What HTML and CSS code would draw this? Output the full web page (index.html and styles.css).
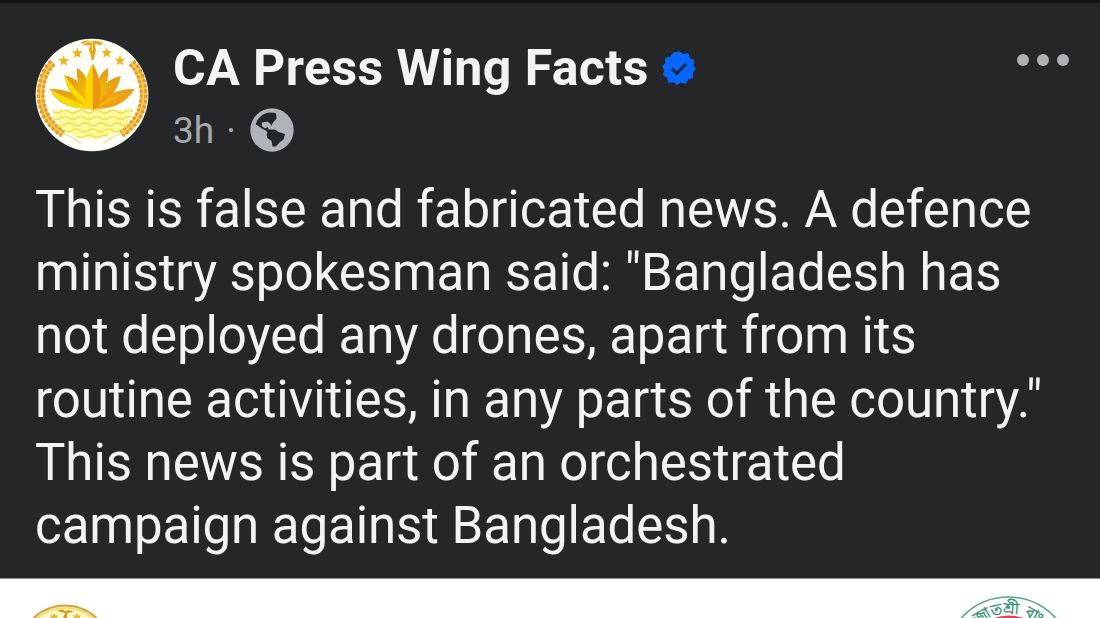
FILE: index.html
```html
<!DOCTYPE html>
<html lang="en">
<head>
    <meta charset="UTF-8">
    <meta name="viewport" content="width=device-width, initial-scale=1.0">
    <title>CA Press Wing Facts</title>
    <link rel="stylesheet" href="styles.css">
</head>
<body>
    <div class="post">
        <div class="header">
            <svg class="avatar" viewBox="30 24 342 342">
                <defs>
                    <linearGradient id="gold" x1="0" y1="0" x2="0" y2="1">
                        <stop offset="0" stop-color="#e09a1c"/>
                        <stop offset="1" stop-color="#f7c800"/>
                    </linearGradient>
                    <path id="star" d="M0-16 4-5 16-5 7 3 10 15 0 8-10 15-7 3-16-5-4-5Z"/>
                    <g id="wreath">
                        <path d="M83 98Q50 130 47 190Q46 265 114 312" fill="none" stroke="#f3bd45" stroke-width="20"/>
                        <path d="M83 98Q50 130 47 190Q46 265 114 312" fill="none" stroke="#e39a2c" stroke-width="24" stroke-dasharray="9 6"/>
                        <path d="M83 98Q50 130 47 190Q46 265 114 312" fill="none" stroke="#f8d765" stroke-width="4"/>
                        <path d="M112 310Q140 318 168 340" fill="none" stroke="#e8d78a" stroke-width="3"/>
                    </g>
                </defs>
                <circle cx="201" cy="195" r="169" fill="#fffef6"/>
                <use href="#wreath"/>
                <use href="#wreath" transform="translate(403 0) scale(-1 1)"/>
                <g fill="#eeb21d">
                    <use href="#star" x="116" y="92"/>
                    <use href="#star" x="157" y="69"/>
                    <use href="#star" x="245" y="68"/>
                    <use href="#star" x="285" y="91"/>
                </g>
                <path d="M167 38Q180 28 198 34Q218 28 234 40L226 47Q216 39 209 44L213 60Q210 72 206 90H200Q198 72 191 60L196 45Q184 50 167 38Z" fill="#e8a51c"/>
                <path d="M176 40Q190 33 202 37V62" fill="none" stroke="#fff1a0" stroke-width="3"/>
                <g fill="url(#gold)">
                    <path d="M203 236Q105 242 75 177Q158 178 203 234Z"/>
                    <path d="M203 236Q290 242 328 177Q250 178 203 234Z"/>
                    <path d="M200 232Q130 210 118 136Q182 150 200 230Z"/>
                    <path d="M205 232Q272 210 287 138Q224 152 205 230Z"/>
                    <path d="M198 220Q150 170 156 114Q195 135 198 215Z"/>
                    <path d="M207 220Q255 170 249 114Q211 135 207 215Z"/>
                </g>
                <path d="M203 235Q112 240 75 177Q135 212 203 235ZM203 234Q135 210 118 136Q158 190 203 234Z" fill="#ffdc00"/>
                <path d="M203 235Q286 242 328 177Q262 216 203 235ZM205 232Q268 210 287 138Q245 190 205 232Z" fill="#f09f12"/>
                <path d="M203 100Q167 165 186 230L203 242Z" fill="#ffd200"/>
                <path d="M203 100Q239 165 220 230L203 242Z" fill="#ec980f"/>
                <path d="M82 240H185L203 245 220 240H322L304 288Q260 326 201 326Q135 322 105 288Z" fill="#fff9a0"/>
                <g fill="none" stroke="#f4df4c" stroke-width="5">
                    <path d="M84 245q12 9 24 0t24 0 24 0 24 0 24 0 24 0 24 0 24 0 24 0 24 0"/>
                    <path d="M84 264q12 9 24 0t24 0 24 0 24 0 24 0 24 0 24 0 24 0 24 0 24 0"/>
                    <path d="M96 283q12 9 24 0t24 0 24 0 24 0 24 0 24 0 24 0 24 0 20 0"/>
                    <path d="M118 301q12 9 24 0t24 0 24 0 24 0 24 0 24 0 24 0"/>
                    <path d="M155 319q12 7 24 0t24 0 24 0 22 0"/>
                </g>
            </svg>
            <div class="info">
                <div class="name">
                    <span class="name-text">CA Press Wing Facts</span>
                    <svg class="verified" viewBox="0 0 34 34">
                        <path d="M17 .8 21.2 3.5 26 2.6 27.4 7.4 32 9.6 30.6 14.2 33.4 18 30.3 21.8 30.8 26.6 26 27.9 23.6 32.3 19 31 15 33.4 11.4 30.7 6.8 31.2 5.4 26.6 1.5 24 2.8 19.5.6 15.5 4 12 3.6 7.4 8.4 6.2 11 2.2Z" fill="#0866ff" stroke="#0866ff" stroke-linejoin="round"/>
                        <path d="M10 17.8 14.8 22.3 24.3 12.8" fill="none" stroke="#1c2a48" stroke-width="3"/>
                    </svg>
                </div>
                <div class="meta">
                    <span class="time">3h</span>
                    <span class="dot">·</span>
                    <svg class="globe" viewBox="0 0 44 44">
                        <circle cx="22" cy="22" r="21.7" fill="#b0b3b8"/>
                        <path d="M26 5.3Q16 2.5 9 10Q5.800 13.500 5.800 16.500L9 18.500 12.500 21 16 22.500 17.500 24.500 16.500 27 17.500 30 21.500 33 22.500 38.500 26 38.500 29.500 34.500 33.500 31.500 35 26 28.500 24 25 21.500 19 21.500 17.500 19 15 20.500 11.800 18 12 14.500 17 13.500 20.300 15.500 21 18 23.500 14 26.500 10.500Z" fill="#252628"/>
                    </svg>
                </div>
            </div>
            <svg class="more" viewBox="0 0 54 14">
                <circle cx="7" cy="7" r="6"/>
                <circle cx="27" cy="7" r="6"/>
                <circle cx="47" cy="7" r="6"/>
            </svg>
        </div>
        <p class="text">
            <span>This is false and fabricated news. A defence</span><br>
            <span>ministry spokesman said: "Bangladesh has</span><br>
            <span>not deployed any drones, apart from its</span><br>
            <span>routine activities, in any parts of the country."</span><br>
            <span>This news is part of an orchestrated</span><br>
            <span>campaign against Bangladesh.</span>
        </p>
    </div>
    <div class="attachment">
        <svg class="seal" viewBox="0 0 96 16">
            <circle cx="48" cy="49" r="45.500" fill="#fff9cf" stroke="#cfa548" stroke-width="2"/>
            <circle cx="48" cy="49" r="43" fill="none" stroke="#f5dc68" stroke-width="2"/>
            <path d="M40 9Q45 6 48 9Q53 7 57 10L50 11V16H46L48 11Z" fill="#d99a1c"/>
            <path d="M37 11l1.500 2.500h3l-2 2 .5 2h-6l.5-2-2-2h3ZM60 11l1.500 2.500h3l-2 2 .5 2h-6l.5-2-2-2h3Z" fill="#e9b92f"/>
        </svg>
        <svg class="seal-green" viewBox="0 0 130 24">
            <defs>
                <path id="arc" d="M19 66A46.500 46.500 0 0 1 112 66"/>
            </defs>
            <circle cx="65.500" cy="66.500" r="63.500" fill="#fff" stroke="#55a588" stroke-width="1.500"/>
            <circle cx="65.500" cy="66" r="44.500" fill="#e0405a"/>
            <text class="seal-text"><textPath href="#arc" startOffset="50%" text-anchor="middle">জাতশ্রী বাং</textPath></text>
        </svg>
    </div>
</body>
</html>
```
FILE: styles.css
```css
*{
    margin: 0;
    padding: 0;
    box-sizing: border-box;
}
body{
    width: 1100px;
    height: 618px;
    overflow: hidden;
    background: #fff;
    font-family: Roboto, "Noto Sans", sans-serif;
}
.post{
    height: 579px;
    padding: 35px 30px 0 35px;
    background: #252628;
    border-top: 3px solid #111214;
    border-bottom: 1px solid #8b8c8e;
}
.header{
    display: flex;
    height: 140px;
}
.avatar{
    width: 114px;
    height: 114px;
}
.info{
    flex: 1;
    margin-left: 24px;
}
.name{
    display: flex;
    align-items: center;
    height: 60px;
    color: #f2f3f5;
    font-size: 50px;
    font-weight: bold;
    letter-spacing: 0.43px;
    white-space: nowrap;
}
.verified{
    width: 34px;
    height: 34px;
    margin-left: 13px;
}
.meta{
    display: flex;
    align-items: center;
    height: 64px;
    color: #a6a8ab;
    font-size: 37px;
}
.dot{
    margin: 0 14px 0 12px;
}
.globe{
    width: 44px;
    height: 44px;
}
.more{
    width: 54px;
    height: 14px;
    margin-top: 15px;
    fill: #b0b1b4;
}
.text{
    color: #f2f3f5;
    font-size: 51px;
    line-height: 63.2px;
    letter-spacing: -0.07px;
    white-space: nowrap;
}
.attachment{
    display: flex;
    justify-content: space-between;
    align-items: flex-end;
    height: 39px;
    padding: 0 27px 0 17px;
}
.seal{
    width: 96px;
    height: 16px;
}
.seal-green{
    width: 130px;
    height: 24px;
}
.seal-text{
    fill: #3f9478;
    font-size: 15px;
    font-weight: bold;
    letter-spacing: 0.3px;
}
```
